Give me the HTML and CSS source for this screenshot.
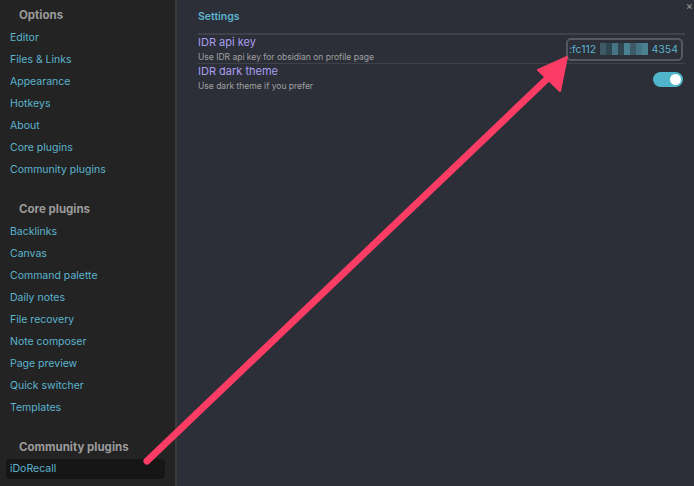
FILE: index.html
```html
<!DOCTYPE html>
<html>
<head>
<meta charset="utf-8">
<link rel="stylesheet" href="styles.css">
</head>
<body>
<div class="app">
  <aside class="sidebar">
    <div class="group">
      <div class="heading">Options</div>
      <div class="item">Editor</div>
      <div class="item">Files &amp; Links</div>
      <div class="item">Appearance</div>
      <div class="item">Hotkeys</div>
      <div class="item">About</div>
      <div class="item">Core plugins</div>
      <div class="item">Community plugins</div>
    </div>
    <div class="group">
      <div class="heading">Core plugins</div>
      <div class="item">Backlinks</div>
      <div class="item">Canvas</div>
      <div class="item">Command palette</div>
      <div class="item">Daily notes</div>
      <div class="item">File recovery</div>
      <div class="item">Note composer</div>
      <div class="item">Page preview</div>
      <div class="item">Quick switcher</div>
      <div class="item">Templates</div>
    </div>
    <div class="group">
      <div class="heading">Community plugins</div>
      <div class="item active">iDoRecall</div>
    </div>
  </aside>
  <main class="main">
    <div class="title">Settings</div>
    <div class="setting">
      <div class="info">
        <div class="name">IDR api key</div>
        <div class="desc">Use IDR api key for obsidian on profile page</div>
      </div>
      <div class="input">
        <span>:fc112</span>
        <span class="blur">
          <i class="b1"></i><i class="b2"></i><i class="b3"></i><i class="b2"></i><i class="b4"></i><i class="b1"></i><i class="b3"></i><i class="b4"></i>
        </span>
        <span>4354</span>
      </div>
    </div>
    <div class="setting last">
      <div class="info">
        <div class="name">IDR dark theme</div>
        <div class="desc">Use dark theme if you prefer</div>
      </div>
      <div class="toggle"><div class="knob"></div></div>
    </div>
  </main>
  <div class="close">×</div>
  <svg class="arrow" width="694" height="486" viewBox="0 0 694 486">
    <line x1="147" y1="461" x2="548" y2="78" stroke="#fb3d66" stroke-width="7" stroke-linecap="round"/>
    <polygon points="567,57 538,70 560,91" fill="#fb3d66" stroke="#fb3d66" stroke-width="2" stroke-linejoin="round"/>
  </svg>
</div>
</body>
</html>
```
FILE: styles.css
```css
html, body {
  margin: 0;
  padding: 0;
  background: #2c2f37;
}
.app {
  position: relative;
  display: flex;
  width: 694px;
  height: 486px;
  overflow: hidden;
  font-family: Inter, "Open Sans", sans-serif;
}
.sidebar {
  flex: none;
  background: #232323;
  border-right: 2px solid #3b3b3b;
  box-sizing: border-box;
  width: 177px;
  padding: 6px 10px 0 6px;
}
.group {
  margin-bottom: 19px;
}
.heading {
  color: #9b9b9b;
  font-weight: 700;
  font-size: 11.5px;
  height: 18px;
  line-height: 18px;
  padding-left: 13px;
  margin-bottom: 3px;
}
.item {
  color: #5cb3ce;
  font-size: 10.5px;
  height: 22px;
  line-height: 22px;
  padding-left: 4px;
}
.item.active {
  background: #161616;
  border-radius: 4px;
  height: 20px;
  line-height: 20px;
  margin-top: 2px;
}
.main {
  flex: 1;
  padding: 8px 9px 0 21px;
}
.title {
  color: #5cb3ce;
  font-size: 10.5px;
  font-weight: 600;
  height: 18px;
  line-height: 18px;
  border-bottom: 2px solid #3f424a;
  padding-bottom: 7px;
}
.setting {
  display: flex;
  align-items: center;
  justify-content: space-between;
  border-bottom: 1.5px solid #3f424a;
  padding: 0 2px 0 0;
  height: 28px;
}
.setting.last {
  border-bottom: none;
}
.info {
  padding-bottom: 0;
}
.name {
  color: #a99ef0;
  font-size: 11px;
  line-height: 14px;
}
.desc {
  color: #a0a0a0;
  font-size: 8.5px;
  line-height: 14px;
  margin-top: 1px;
}
.input {
  display: flex;
  align-items: center;
  box-sizing: border-box;
  width: 117px;
  height: 23px;
  border: 2px solid #56585d;
  border-radius: 5px;
  padding: 0 3px 0 1px;
  color: #5cb3ce;
  font-size: 10.5px;
  justify-content: space-between;
}
.blur {
  display: flex;
  align-items: center;
  height: 12px;
}
.blur i {
  display: block;
  width: 6px;
  height: 12px;
}
.b1 { background: #3d5a66; }
.b2 { background: #2f4550; }
.b3 { background: #457584; }
.b4 { background: #4a8191; }
.toggle {
  width: 30px;
  height: 15px;
  border-radius: 8px;
  background: #4fb5cb;
  position: relative;
  margin-top: 2px;
}
.knob {
  position: absolute;
  right: 2px;
  top: 2px;
  width: 11px;
  height: 11px;
  border-radius: 50%;
  background: #ffffff;
}
.close {
  position: absolute;
  right: 1px;
  top: -1px;
  color: #9a9a9a;
  font-size: 11px;
}
.arrow {
  position: absolute;
  left: 0;
  top: 0;
  pointer-events: none;
}
```
